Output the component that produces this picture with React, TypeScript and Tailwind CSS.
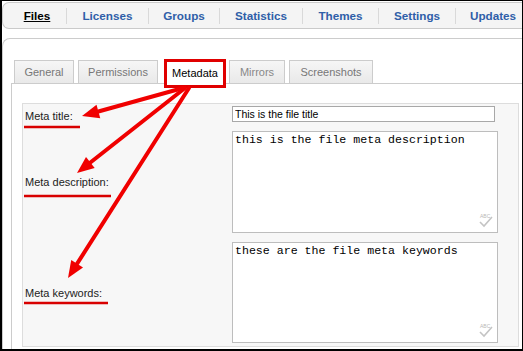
import React from "react";

type Arrow = { x1: number; y1: number; x2: number; y2: number };

const arrows: Arrow[] = [
  { x1: 183, y1: 88, x2: 82, y2: 116 },
  { x1: 185, y1: 88, x2: 77, y2: 173 },
  { x1: 189, y1: 88, x2: 68, y2: 278 },
];

function headPoints(a: Arrow) {
  const dx = a.x2 - a.x1;
  const dy = a.y2 - a.y1;
  const L = Math.hypot(dx, dy);
  const ux = dx / L;
  const uy = dy / L;
  const len = 17;
  const w = 7;
  const bx = a.x2 - ux * len;
  const by = a.y2 - uy * len;
  return {
    bx,
    by,
    pts: `${a.x2},${a.y2} ${bx - uy * w},${by + ux * w} ${bx + uy * w},${by - ux * w}`,
  };
}

function SpellIcon() {
  return (
    <svg
      className="absolute right-[5px] bottom-[5px]"
      width="16"
      height="15"
      viewBox="0 0 16 15"
    >
      <text x="3" y="5" fontSize="5" fill="#b8b8b8" fontFamily="Liberation Sans, Arial, sans-serif">
        ABC
      </text>
      <path d="M3 9 L7 13 L15 4" stroke="#c4c4c4" strokeWidth="1.6" fill="none" />
    </svg>
  );
}

function Sep() {
  return <span className="w-px h-[16px] bg-[#d9d9d9] shrink-0" />;
}

export default function App() {
  return (
    <div className="relative w-[523px] h-[351px] overflow-hidden bg-white border-black border-t border-r border-l-2 border-b-2 font-['Liberation_Sans',Arial,sans-serif]">
      {/* Top nav */}
      <div className="mt-px h-[27px] w-[560px] flex items-center rounded-l-[7px] border border-r-0 border-[#cacaca] bg-[#f4f4f4] pl-[5px] text-[11.7px] font-bold text-[#2f5ea8] whitespace-nowrap">
        <span className="w-[58px] text-center text-black underline">Files</span>
        <Sep />
        <span className="w-[81px] text-center">Licenses</span>
        <Sep />
        <span className="w-[70px] text-center">Groups</span>
        <Sep />
        <span className="w-[82px] text-center">Statistics</span>
        <Sep />
        <span className="w-[75px] text-center">Themes</span>
        <Sep />
        <span className="w-[76px] text-center">Settings</span>
        <Sep />
        <span className="w-[74px] text-center">Updates</span>
      </div>

      {/* Main panel */}
      <div className="mt-[9px] w-[560px] h-[330px] rounded-tl-[8px] border border-r-0 border-b-0 border-[#cccccc] bg-white pl-[8px] pt-[21px]">
        {/* Tabs */}
        <div className="ml-[3px] flex items-start h-[23px] text-[11px] whitespace-nowrap">
          <div className="w-[60px] h-[23px] flex items-center justify-center border border-b-0 border-[#cccccc] bg-linear-to-b from-[#f6f6f6] to-[#e9e9e9] text-[#777777]">
            General
          </div>
          <div className="ml-[4px] w-[80px] h-[23px] flex items-center justify-center border border-b-0 border-[#cccccc] bg-linear-to-b from-[#f6f6f6] to-[#e9e9e9] text-[#777777]">
            Permissions
          </div>
          <div className="relative z-10 ml-[6px] -mt-px w-[62px] h-[29px] flex items-center justify-center border-[3px] border-[#e00000] bg-white text-black">
            Metadata
          </div>
          <div className="ml-[3px] w-[56px] h-[23px] flex items-center justify-center border border-b-0 border-[#cccccc] bg-linear-to-b from-[#f6f6f6] to-[#e9e9e9] text-[#888888]">
            Mirrors
          </div>
          <div className="ml-[4px] w-[84px] h-[23px] flex items-center justify-center border border-b-0 border-[#cccccc] bg-linear-to-b from-[#f6f6f6] to-[#e9e9e9] text-[#777777]">
            Screenshots
          </div>
        </div>

        {/* Tab panel */}
        <div className="w-[560px] h-[280px] border-l border-t border-[#cccccc] bg-white pl-[10px] pt-[19px]">
          <div className="w-[497px] h-[244px] border border-[#dddddd] bg-[#f7f7f7] pt-[2px] grid grid-cols-[209px_1fr] grid-rows-[16px_102px_101px] gap-y-[9px] items-center text-[11px] leading-[16px] text-[#222222]">
            <div className="pl-[2px] translate-y-[2px]">Meta title:</div>
            <div>
              <input
                readOnly
                value="This is the file title"
                className="block w-[263px] h-[16px] border border-[#a8a8a8] bg-white px-[2px] text-[10.5px] text-black outline-none font-['Liberation_Sans',Arial,sans-serif]"
              />
            </div>

            <div className="pl-[2px]">Meta description:</div>
            <div className="relative w-[266px] h-[102px]">
              <textarea
                readOnly
                value="this is the file meta description"
                className="block w-[266px] h-[102px] resize-none overflow-hidden border border-[#bdbdbd] bg-white px-[2px] pt-[1px] text-[11.6px] leading-[14px] text-black outline-none font-['Liberation_Mono','Courier_New',monospace]"
              />
              <SpellIcon />
            </div>

            <div className="pl-[2px]">Meta keywords:</div>
            <div className="relative w-[266px] h-[101px]">
              <textarea
                readOnly
                value="these are the file meta keywords"
                className="block w-[266px] h-[101px] resize-none overflow-hidden border border-[#bdbdbd] bg-white px-[2px] pt-[1px] text-[11.6px] leading-[14px] text-black outline-none font-['Liberation_Mono','Courier_New',monospace]"
              />
              <SpellIcon />
            </div>
          </div>
        </div>
      </div>

      {/* Annotation overlay */}
      <svg
        className="absolute left-[-2px] top-[-1px] pointer-events-none z-20"
        width="523"
        height="351"
        viewBox="0 0 523 351"
      >
        <line x1="24" y1="127" x2="80" y2="127" stroke="#d80000" strokeWidth="2.5" />
        <line x1="24" y1="196" x2="111" y2="196" stroke="#d80000" strokeWidth="2.5" />
        <line x1="24" y1="303" x2="108" y2="303" stroke="#d80000" strokeWidth="2.5" />
        {arrows.map((a, i) => {
          const h = headPoints(a);
          return (
            <g key={i}>
              <line
                x1={a.x1}
                y1={a.y1}
                x2={h.bx}
                y2={h.by}
                stroke="#f00000"
                strokeWidth="4"
                strokeLinecap="round"
              />
              <polygon points={h.pts} fill="#f00000" />
            </g>
          );
        })}
      </svg>
    </div>
  );
}
